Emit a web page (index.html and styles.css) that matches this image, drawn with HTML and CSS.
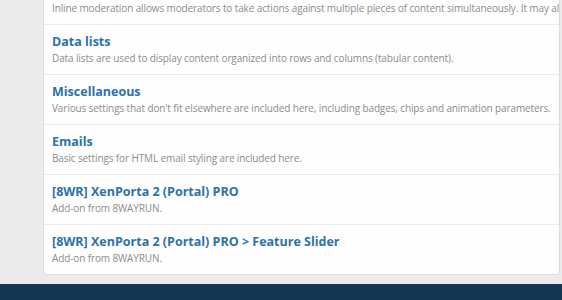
FILE: index.html
```html
<!DOCTYPE html>
<html>
<head>
<meta charset="utf-8">
<link rel="stylesheet" href="styles.css">
</head>
<body>
<div class="page">
  <div class="block">
    <div class="row">
      <a class="title">Inline moderation</a>
      <div class="desc">Inline moderation allows moderators to take actions against multiple pieces of content simultaneously. It may also be used to configure related options.</div>
    </div>
    <div class="row">
      <a class="title">Data lists</a>
      <div class="desc">Data lists are used to display content organized into rows and columns (tabular content).</div>
    </div>
    <div class="row">
      <a class="title">Miscellaneous</a>
      <div class="desc">Various settings that don't fit elsewhere are included here, including badges, chips and animation parameters.</div>
    </div>
    <div class="row">
      <a class="title">Emails</a>
      <div class="desc">Basic settings for HTML email styling are included here.</div>
    </div>
    <div class="row">
      <a class="title">[8WR] XenPorta 2 (Portal) PRO</a>
      <div class="desc">Add-on from 8WAYRUN.</div>
    </div>
    <div class="row">
      <a class="title">[8WR] XenPorta 2 (Portal) PRO &gt; Feature Slider</a>
      <div class="desc">Add-on from 8WAYRUN.</div>
    </div>
  </div>
</div>
<footer class="footer"></footer>
</body>
</html>
```
FILE: styles.css
```css
html, body {
  margin: 0;
  padding: 0;
  background: #ebebeb;
  overflow: hidden;
}
body {
  font-family: "Open Sans", "Noto Sans", sans-serif;
}
.page {
  padding: 0 2px 9px 43px;
  margin-top: -26px;
}
.block {
  background: #fefefe;
  border: 1px solid #dcdcdc;
  border-radius: 3px;
  overflow: hidden;
}
.row {
  padding: 9px 10px 8px 8px;
  border-top: 1px solid #ececec;
  white-space: nowrap;
}
.row:first-child {
  border-top: none;
}
.title {
  display: block;
  font-size: 12.5px;
  font-weight: 700;
  line-height: 16px;
  color: #2b72aa;
}
.desc {
  font-size: 10px;
  letter-spacing: -0.12px;
  line-height: 16px;
  color: #8c8c8c;
}
.footer {
  background: #143653;
  height: 16px;
}
```
